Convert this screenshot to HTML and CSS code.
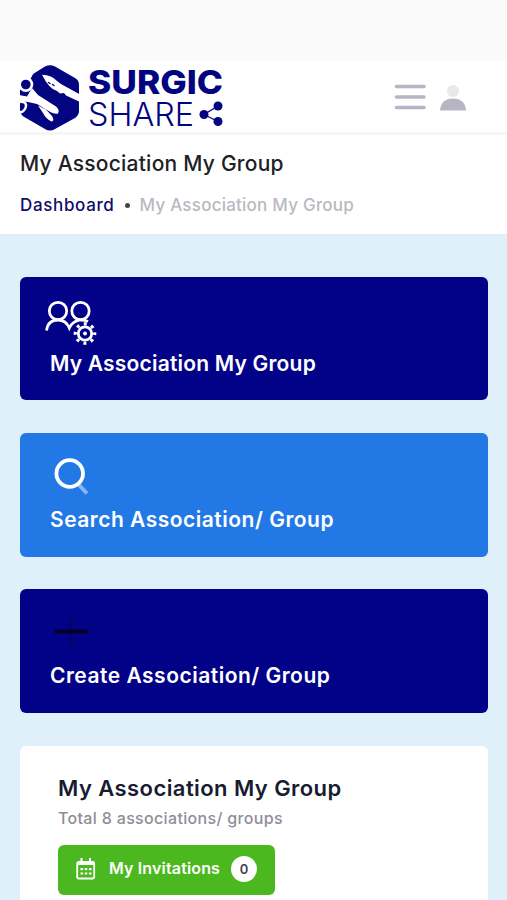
FILE: index.html
```
<!DOCTYPE html>
<html lang="en">
<head>
<meta charset="UTF-8">
<meta name="viewport" content="width=device-width, initial-scale=1.0">
<title>My Association My Group</title>
<link rel="stylesheet" href="styles.css">
</head>
<body>
<div class="statusbar"></div>
<header class="header">
	<svg class="logo" width="208" height="70" viewBox="18 62 208 70">
		<path fill="#03047f" d="M45 66.500Q50 64 55 66.500L75 78Q79 80 79 85V111Q79 115 75 118L55 129Q50 132 45 129L26 118Q20 115 20 110V90L33 74Z"/>
		<!-- scalpel -->
		<path fill="#fff" d="M42 74.700Q52 75 57 81L61 84L80 94.500V102L66 95.500L64 93L60 93.500L57 91Q49 89 42 74.700Z"/>
		<path stroke="#03047f" stroke-width="1.400" stroke-linecap="round" d="M48.500 82.500L50 83.500M52.500 84.500L54 85.500"/>
		<!-- scissors -->
		<path fill="#fff" d="M18 74H33L30 80L18 90Z"/>
		<circle cx="25.800" cy="84.500" r="7.500" fill="#fff"/>
		<circle cx="25.800" cy="84.500" r="4.800" fill="#03047f"/>
		<path fill="#fff" d="M19 95L27 96.500L32 88L38 95L56 106.500Q60 110 58 113.500Q55 115 47 110L37 104L28 102L19 101Z"/>
		<path fill="#fff" d="M38 105.500L46 109.500L52 116Q55 121 51.500 121.500Q46 119 43 113Z"/>
		<path fill="none" stroke="#fff" stroke-width="2.500" d="M19 102Q28 101 25.500 108Q23 113 18 112.500"/>
		<text class="logo-bold" x="88" y="93.500" textLength="135" lengthAdjust="spacingAndGlyphs">SURGIC</text>
		<text class="logo-thin" x="88" y="126" textLength="106" lengthAdjust="spacingAndGlyphs">SHARE</text>
		<path fill="none" stroke="#03047f" stroke-width="1.300" d="M218 106L204 114.500L218 121.500"/>
		<g fill="#03047f">
			<circle cx="204" cy="114.500" r="4.500"/>
			<circle cx="218" cy="106" r="4.500"/>
			<circle cx="218" cy="121.500" r="4.500"/>
		</g>
	</svg>
	<div class="header-tools">
		<svg width="32" height="26" viewBox="0 0 32 26" stroke="#b5b5c3" stroke-width="3.600" stroke-linecap="round">
			<path d="M2.500 2.500H30M2.500 13H30M2.500 23.500H30"/>
		</svg>
		<svg width="26" height="27" viewBox="0 0 26 27">
			<circle cx="13" cy="7" r="6" fill="#e9e9ed"/>
			<path fill="#b5b5c3" d="M0 26.500Q1 14.500 13 14.500T26 26.500Z"/>
		</svg>
	</div>
</header>
<div class="toolbar">
	<h1 class="toolbar-title">My Association My Group</h1>
	<div class="breadcrumb">
		<a class="crumb-link">Dashboard</a>
		<span class="crumb-dot"></span>
		<span class="crumb-now">My Association My Group</span>
	</div>
</div>
<main class="content">
	<a class="tile">
		<svg width="54" height="46" viewBox="0 0 54 46" fill="none" stroke="#fff" stroke-width="2.800">
			<circle cx="13" cy="11" r="8.700"/>
			<circle cx="35.500" cy="11" r="8.700"/>
			<path d="M1.500 30.500Q3 20 13 20Q21 20 24.300 28Q27 22 34 20.200Q39 19.500 43 21.500"/>
			<circle cx="40" cy="33.500" r="9.500" fill="#010288" stroke="none"/>
			<circle cx="40" cy="33.500" r="6.700"/>
			<circle cx="40" cy="33.500" r="9.700" stroke-width="3.200" stroke-dasharray="3 4.618" stroke-dashoffset="1.500"/>
			<circle cx="40" cy="33.500" r="2" fill="#fff" stroke="none"/>
		</svg>
		<span class="tile-text">My Association My Group</span>
	</a>
	<a class="tile tile-blue">
		<svg width="54" height="46" viewBox="0 0 54 46" fill="none">
			<path stroke="#86b7f4" stroke-width="4" d="M34 29L42 37.500"/>
			<circle cx="24.700" cy="17.500" r="13.300" stroke="#fff" stroke-width="3.800"/>
		</svg>
		<span class="tile-text tile-text-wide">Search Association/ Group</span>
	</a>
	<a class="tile">
		<svg width="54" height="46" viewBox="0 0 54 46">
			<rect x="24" y="4" width="4" height="31" rx="1" fill="#020272"/>
			<rect x="9.500" y="17.500" width="34" height="4" rx="1" fill="#020226"/>
		</svg>
		<span class="tile-text tile-text-wide">Create Association/ Group</span>
	</a>
	<section class="panel">
		<h2 class="panel-title">My Association My Group</h2>
		<p class="panel-sub">Total 8 associations/ groups</p>
		<button class="btn">
			<svg width="20" height="22" viewBox="0 0 20 22" fill="none" stroke="#fff">
				<rect x="1.200" y="4" width="17" height="16.500" rx="1.500" stroke-width="1.800"/>
				<path stroke-width="3" d="M1.500 5.500H18"/>
				<path stroke-width="2" d="M5.500 0V5M14 0V5"/>
				<path stroke-width="2.200" stroke-dasharray="2.600 1.600" d="M4.500 11.200H15.500M4.500 15.500H15.500"/>
			</svg>
			<span class="btn-text">My Invitations</span>
			<span class="badge">0</span>
		</button>
	</section>
</main>
</body>
</html>
```
FILE: styles.css
```
*{
	box-sizing: border-box;
	margin: 0;
	padding: 0;
}
body {
	background: #e0f0fb;
	font-family: Inter, "Open Sans", sans-serif;
	font-weight: 500;
	white-space: nowrap;
}
svg {
	display: block;
	flex: none;
}
.statusbar {
	height: 61px;
	background: #fafafa;
}
.header {
	height: 74px;
	padding: 1px 41px 0 18px;
	display: flex;
	justify-content: space-between;
	background: #fff;
	border-bottom: 3px solid #f6f6f7;
}
.logo {
	overflow: visible;
}
.logo-bold {
	font: 800 33px Inter, sans-serif;
	fill: #03047f;
}
.logo-thin {
	font: 300 33px Inter, sans-serif;
	fill: #03047f;
}
.header-tools {
	display: flex;
	gap: 14px;
	padding-top: 22px;
}
.toolbar {
	height: 99px;
	padding: 13px 20px 0;
	background: #fff;
}
.toolbar-title {
	font-size: 21px;
	font-weight: 500;
	line-height: 32px;
	letter-spacing: .23px;
	color: #202124;
}
.breadcrumb {
	display: flex;
	align-items: center;
	margin-top: 13px;
	font-size: 17px;
	line-height: 24px;
	letter-spacing: .23px;
}
.crumb-link {
	letter-spacing: .65px;
	color: #100c68;
}
.crumb-dot {
	width: 5px;
	height: 5px;
	margin: 0 10px;
	border-radius: 50%;
	background: #444;
}
.crumb-now {
	color: #b9b9c0;
}
.content {
	display: flex;
	flex-direction: column;
	gap: 32.500px;
	height: 666px;
	padding: 42.500px 19px 0 20px;
}
.tile {
	height: 123.900px;
	flex: none;
	padding: 23px 25px 0;
	border-radius: 6px;
	background: #010288;
	color: #fff;
}
.tile-blue {
	background: #2279e6;
}
.tile-text {
	display: block;
	margin: 1px 0 0 5px;
	font-size: 21px;
	font-weight: 600;
	line-height: 33px;
	letter-spacing: .2px;
}
.tile-text-wide {
	letter-spacing: .5px;
}
.panel {
	flex: 1;
	padding: 26.500px 38px 0;
	border-radius: 6px 6px 0 0;
	background: #fff;
}
.panel-title {
	font-size: 22px;
	font-weight: 600;
	line-height: 32px;
	letter-spacing: .43px;
	color: #181c32;
}
.panel-sub {
	margin-top: 1px;
	font-size: 16px;
	line-height: 26px;
	letter-spacing: .33px;
	color: #8e8e98;
}
.btn {
	display: flex;
	align-items: center;
	width: 217px;
	height: 50px;
	margin-top: 13.500px;
	padding: 0 18px 1px;
	border: 0;
	border-radius: 6px;
	background: #4cb81f;
	color: #fff;
	font: 600 16px Inter, sans-serif;
}
.btn-text {
	width: 111px;
	margin: 0 11px 2px 13px;
	letter-spacing: .15px;
	text-align: left;
}
.badge {
	flex: none;
	width: 26px;
	height: 26px;
	border-radius: 50%;
	background: #fff;
	color: #444450;
	font-size: 13px;
	line-height: 26px;
	text-align: center;
}
```
